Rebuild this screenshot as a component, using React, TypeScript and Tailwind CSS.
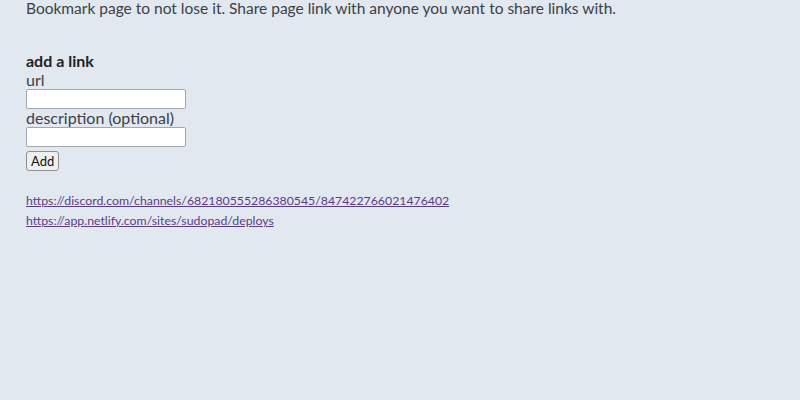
export default function App() {
  return (
    <div className="min-h-[400px] w-[800px] bg-[#e2e8f0] px-[26px] text-[#3b3f46] font-['Lato',sans-serif]">
      <p className="text-[15.5px] leading-[16px]">
        Bookmark page to not lose it. Share page link with anyone you want to share links with.
      </p>
      <div className="mt-[35px] flex flex-col items-start">
        <h2 className="text-[16px] font-bold leading-[19px] text-[#222]">add a link</h2>
        <label className="text-[16px] leading-[19px]">url</label>
        <input className="w-[160px] h-[20px] bg-white border border-[#a3a7ad] rounded-[2px]" />
        <label className="text-[16px] leading-[18px]">description (optional)</label>
        <input className="w-[160px] h-[20px] bg-white border border-[#a3a7ad] rounded-[2px]" />
        <button className="mt-[4px] h-[20px] px-[4px] text-[13px] leading-[18px] text-[#111] bg-[#efefef] border border-[#8f8f8f] rounded-[3px]">
          Add
        </button>
      </div>
      <div className="mt-[20px] flex flex-col items-start text-[12.3px] leading-[20px]">
        <a href="#" className="text-[#5b3c88] underline">https://discord.com/channels/682180555286380545/847422766021476402</a>
        <a href="#" className="text-[#5b3c88] underline">https://app.netlify.com/sites/sudopad/deploys</a>
      </div>
    </div>
  );
}
